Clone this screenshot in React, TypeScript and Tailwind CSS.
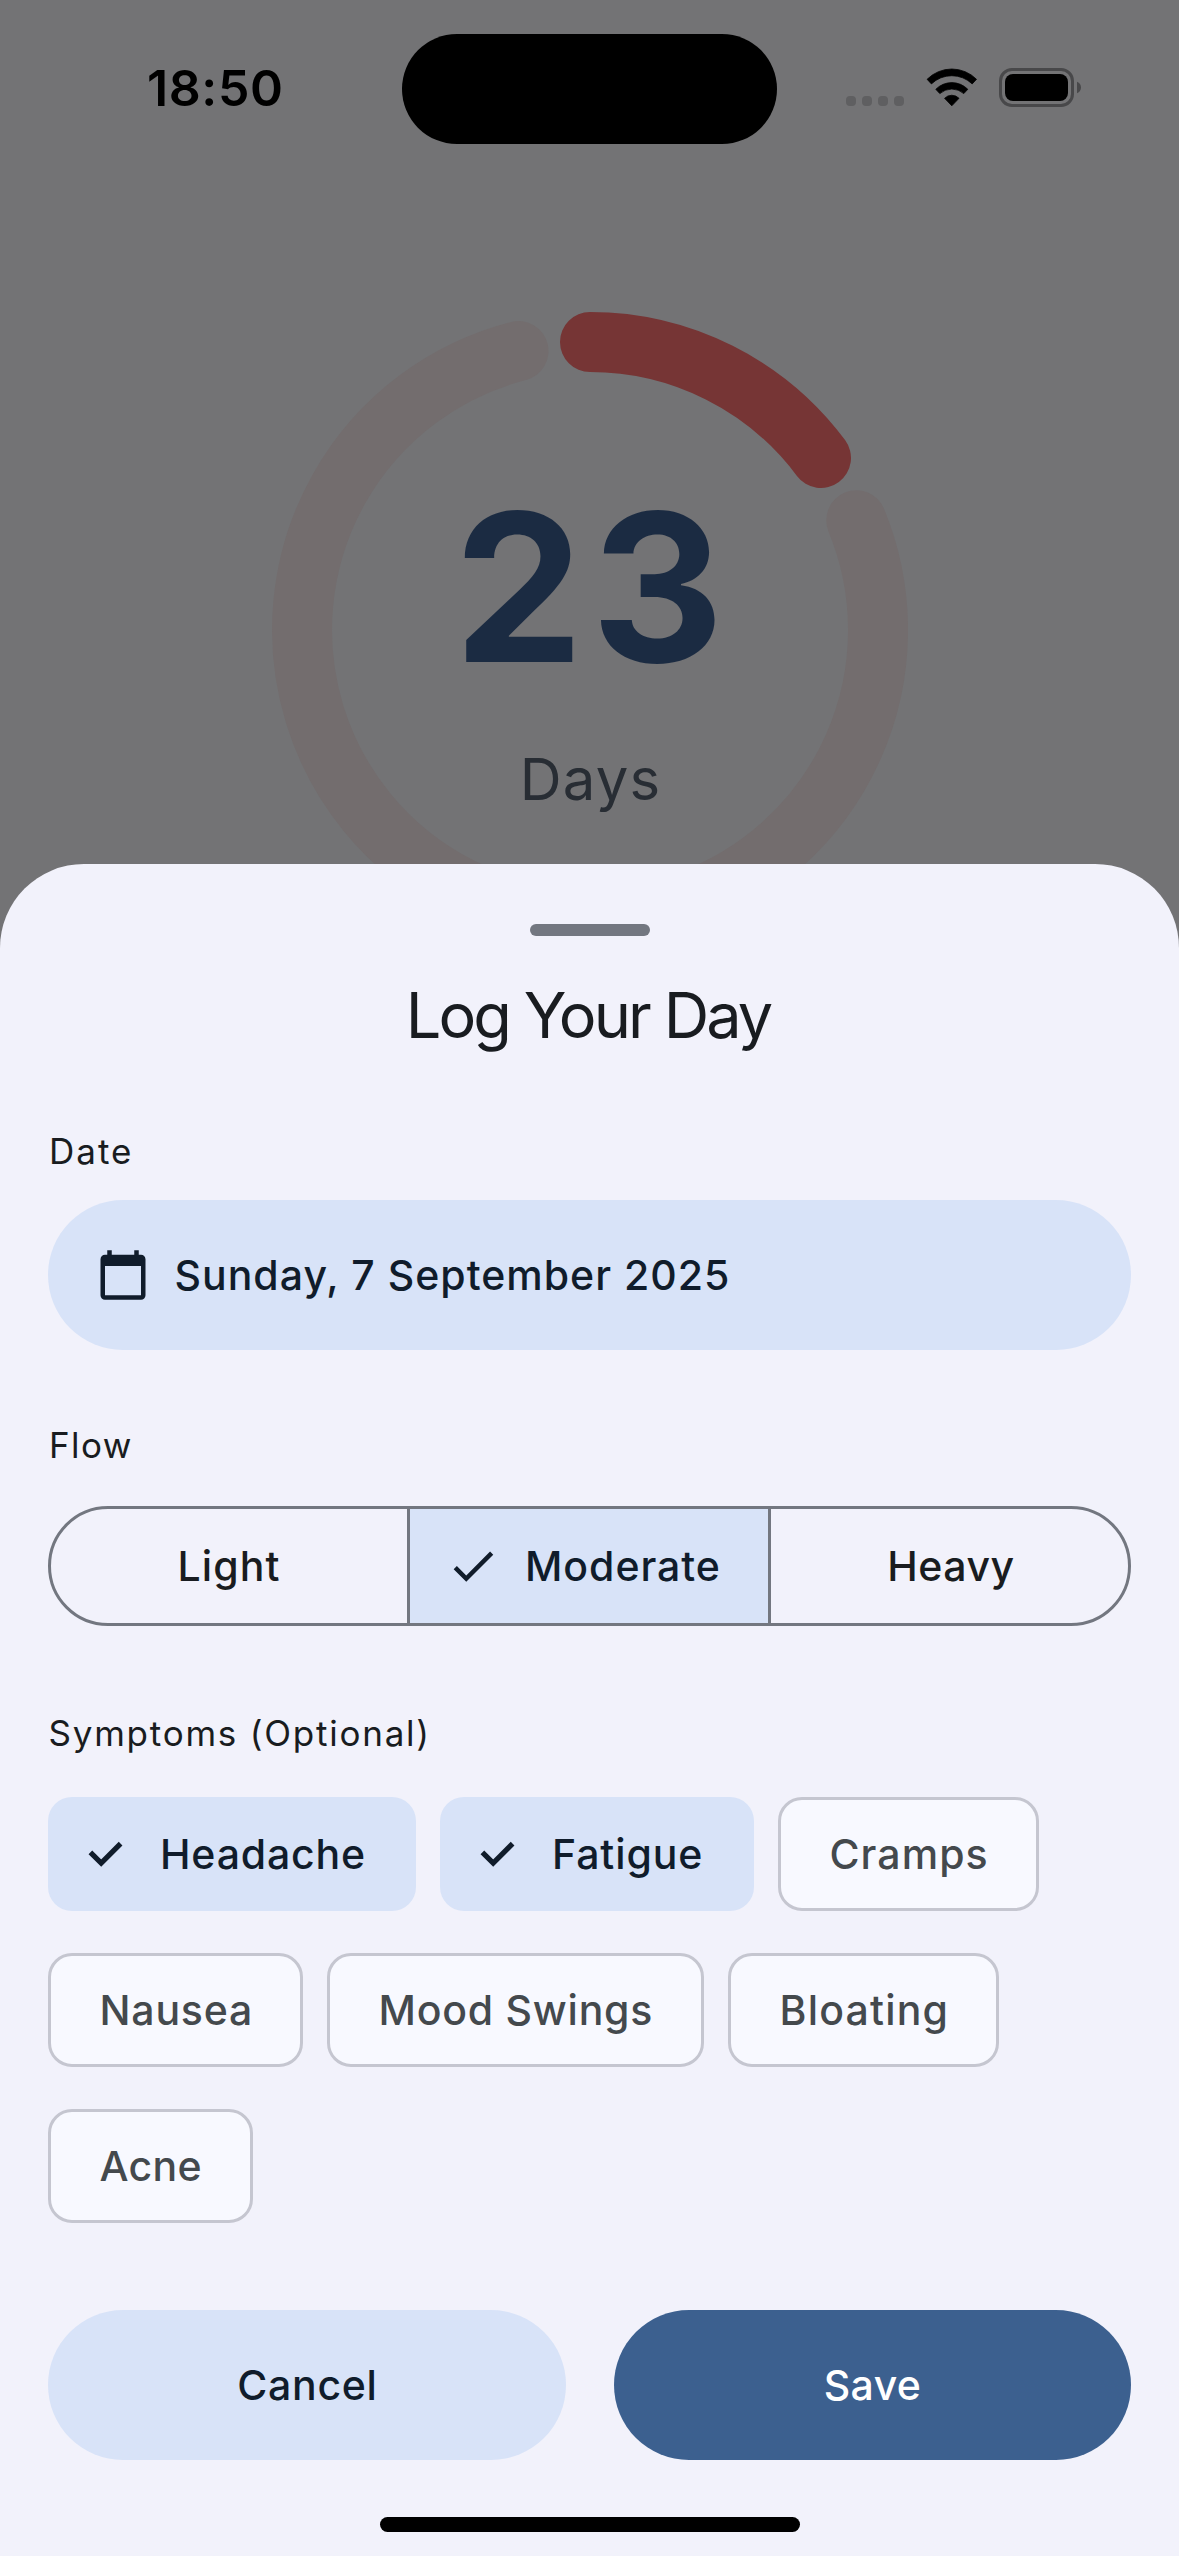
import type { ReactNode } from 'react';

function StatusBar() {
  return (
    <header className="flex h-[178px] items-center">
      <div className="-mt-[2px] flex w-[402px] justify-start pl-[147px]">
        <span className="text-[50px] leading-[60px] font-semibold tracking-[0.6px] text-black">18:50</span>
      </div>
      <div className="h-[110px] w-[375px] rounded-full bg-black" />
      <div className="-mt-[3px] ml-[69px] flex h-[39px] items-start">
        <div className="mt-[28px] flex gap-[6px]">
          {[0, 1, 2, 3].map((i) => (
            <span key={i} className="size-[10px] rounded-[4px] bg-[#5f5f61]" />
          ))}
        </div>
        <svg className="ml-[22px]" width="52" height="39" viewBox="0 0 52 39">
          <g fill="#000" stroke="#000" strokeWidth="0.8" strokeLinejoin="round">
            <path d="M1.1 11.3A34.8 34.8 0 0 1 50.5 11.3L46.2 15.9A29.5 29.5 0 0 0 5.4 15.9Z" />
            <path d="M9.8 21.3A22.5 22.5 0 0 1 41.8 21.3L37.8 25.6A18 18 0 0 0 13.8 25.6Z" />
            <path d="M18.6 30.3A10 10 0 0 1 33 30.3L25.8 37.8Z" />
          </g>
        </svg>
        <div className="ml-[21px] flex h-[39px] w-[75px] rounded-[13px] border-[3px] border-[#48484a] p-[3px]">
          <div className="flex-1 rounded-[8px] bg-black" />
        </div>
        <svg className="mt-[13px] ml-[3px]" width="4" height="13" viewBox="0 0 4 13">
          <path d="M0 0.8C2.6 1.8 4 4 4 6.5S2.6 11.2 0 12.2Z" fill="#48484a" />
        </svg>
      </div>
    </header>
  );
}

function CycleRing() {
  return (
    <section className="mt-[134px] grid justify-center">
      <svg className="col-start-1 row-start-1" width="636" height="636" viewBox="0 0 636 636" fill="none" strokeWidth="60" strokeLinecap="round">
        <path d="M584.3 208.2A288 288 0 1 1 246.5 39" stroke="#736d6e" />
        <path d="M318 30A288 288 0 0 1 549 146" stroke="#763535" />
      </svg>
      <div className="col-start-1 row-start-1 flex flex-col items-center pt-[155px]">
        <span className="-mr-[6px] text-[206px] leading-[240px] font-bold tracking-[7.5px] text-[#1b2b42]">23</span>
        <span className="mt-[36px] pl-[2px] text-[58px] leading-[72px] tracking-[1.2px] text-[#282d34]">Days</span>
      </div>
    </section>
  );
}

function CheckIcon() {
  return (
    <svg className="shrink-0" width="54" height="54" viewBox="0 0 24 24">
      <path d="M9 16.17 4.83 12l-1.42 1.41L9 19 21 7l-1.41-1.41z" fill="#101c2b" />
    </svg>
  );
}

function Label({ className, children }: { className: string; children: ReactNode }) {
  return <h2 className={`h-[48px] text-[35px] leading-[48px] font-normal text-[#191c20] ${className}`}>{children}</h2>;
}

function Chip({ label, className, selected }: { label: string; className: string; selected?: boolean }) {
  if (selected) {
    return (
      <button className={`flex h-[114px] items-center rounded-[24px] bg-[#d8e3f8] pl-[35.5px] text-[#101c2b] ${className}`}>
        <svg className="mr-[33.5px] shrink-0" width="43" height="43" viewBox="0 0 43 43">
          <path d="M6.4 19.3L17.2 30.1L36.6 10.7" fill="none" stroke="#101c2b" strokeWidth="5.2" />
        </svg>
        {label}
      </button>
    );
  }
  return (
    <button className={`flex h-[114px] items-center rounded-[24px] border-[3px] border-[#c5c6d0] bg-[#f8f9ff] pl-[48.5px] text-[#44494d] ${className}`}>
      {label}
    </button>
  );
}

export default function App() {
  return (
    <div className="relative h-[2556px] w-[1179px] overflow-hidden bg-[#737375] font-['Inter',sans-serif]">
      <StatusBar />
      <CycleRing />

      <main className="absolute inset-x-0 bottom-0 flex h-[1692px] flex-col rounded-t-[84px] bg-[#f2f2fb] px-[48px] pt-[60px] text-[41px] leading-[60px] font-medium whitespace-nowrap">
        <div className="h-[12px] w-[120px] self-center rounded-[6px] bg-[#737780]" />
        <h1 className="mt-[40px] h-[78px] pr-[3px] text-center text-[63px] leading-[78px] font-normal tracking-[-2.9px] text-[#191c20]">
          Log Your Day
        </h1>

        <Label className="mt-[73px] pl-px tracking-[2px]">Date</Label>
        <button className="mt-[25px] flex h-[150px] items-center gap-[24.5px] rounded-full bg-[#d8e3f8] pl-[48px] tracking-[1.02px] text-[#101c2b]">
          <svg width="54" height="54" viewBox="0 0 24 24">
            <path
              d="M20 3h-1V1h-2v2H7V1H5v2H4c-1.1 0-2 .9-2 2v16c0 1.1.9 2 2 2h16c1.1 0 2-.9 2-2V5c0-1.1-.9-2-2-2zm0 18H4V8h16v13z"
              fill="#101c2b"
            />
          </svg>
          Sunday, 7 September 2025
        </button>

        <Label className="mt-[71px] pl-px tracking-[1.4px]">Flow</Label>
        <div className="mt-[37px] flex h-[120px] overflow-hidden rounded-full border-[3px] border-[#737780]">
          <button className="w-[356px] tracking-[1.1px] text-[#191c20]">Light</button>
          <button className="flex w-[364px] items-center gap-[25px] border-x-[3px] border-[#737780] bg-[#d8e3f8] pl-[36px] tracking-[0.95px] text-[#101c2b]">
            <CheckIcon />
            Moderate
          </button>
          <button className="flex-1 pl-[3px] tracking-[0.5px] text-[#191c20]">Heavy</button>
        </div>

        <Label className="mt-[83px] pl-[0.5px] tracking-[1.77px]">Symptoms (Optional)</Label>
        <div className="mt-[40px] flex flex-wrap gap-x-[24px] gap-y-[42px]">
          <Chip label="Headache" className="w-[368px] tracking-[0.81px]" selected />
          <Chip label="Fatigue" className="w-[314px] tracking-[0.9px]" selected />
          <Chip label="Cramps" className="w-[261px] tracking-[1.05px]" />
          <Chip label="Nausea" className="w-[255px] tracking-[0.8px]" />
          <Chip label="Mood Swings" className="w-[377px] tracking-[0.77px]" />
          <Chip label="Bloating" className="w-[271px] tracking-[1.2px]" />
          <Chip label="Acne" className="w-[205px] tracking-[0.3px]" />
        </div>

        <div className="mt-[87px] flex gap-[48px]">
          <button className="h-[150px] flex-1 rounded-full bg-[#d8e3f8] pl-px tracking-[0.7px] text-[#101c2b]">Cancel</button>
          <button className="h-[150px] flex-1 rounded-full bg-[#3c608f] tracking-[0.4px] text-white">Save</button>
        </div>
        <div className="mt-[57px] h-[15px] w-[420px] self-center rounded-full bg-black" />
      </main>
    </div>
  );
}
